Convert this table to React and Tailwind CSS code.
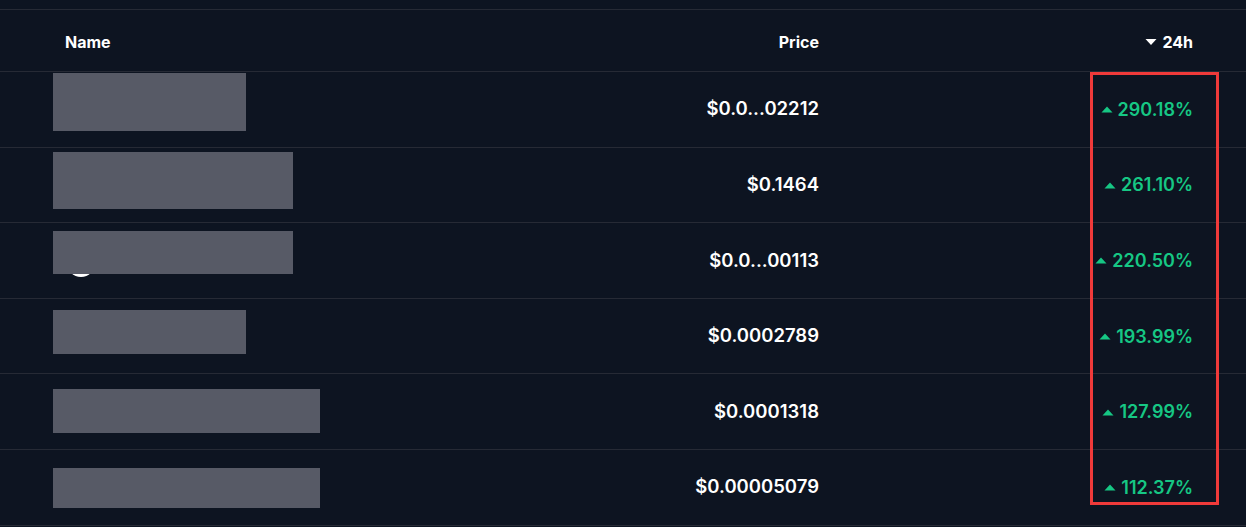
import React from 'react';

const rows = [
  { price: '$0.0...02212', change: '290.18%', box: 'w-[193px] h-[58px] mt-[1px]' },
  { price: '$0.1464', change: '261.10%', box: 'w-[240px] h-[57px] mt-[4px]' },
  { price: '$0.0...00113', change: '220.50%', box: 'w-[240px] h-[43px] mt-[8px]', logo: true },
  { price: '$0.0002789', change: '193.99%', box: 'w-[193px] h-[44px] mt-[11px]' },
  { price: '$0.0001318', change: '127.99%', box: 'w-[267px] h-[44px] mt-[15px]' },
  { price: '$0.00005079', change: '112.37%', box: 'w-[267px] h-[40px] mt-[18px]' },
];

const CaretUp = () => (
  <svg width="12" height="12" viewBox="0 0 12 12" className="mr-[5px]">
    <path d="M0.5 9.5 L6 3.5 L11.5 9.5 Z" fill="#16c784" />
  </svg>
);

const CaretDown = () => (
  <svg width="12" height="12" viewBox="0 0 12 12" className="mr-[5px]">
    <path d="M0.5 3 L6 9 L11.5 3 Z" fill="#ffffff" />
  </svg>
);

export default function App() {
  return (
    <div className="relative w-[1246px] h-[527px] overflow-hidden bg-[#0d1421] pt-[9px] font-['Inter',sans-serif] text-white">
      <div className="border-t border-[#262a35]">
        {/* header */}
        <div className="flex h-[62px] items-center border-b border-[#262a35] pt-[3px] text-[16px] font-bold">
          <div className="flex-1 pl-[65px]">Name</div>
          <div className="w-[200px] text-right">Price</div>
          <div className="flex w-[374px] items-center justify-end">
            <CaretDown />
            24h
          </div>
          <div className="w-[53px]" />
        </div>

        {rows.map((r, i) => (
          <div key={i} className="flex h-[75.6px] border-b border-[#262a35]">
            <div className="relative flex-1 pl-[53px]">
              {r.logo && (
                <div className="absolute left-[67px] top-[26px] h-[28px] w-[28px] rounded-full bg-white" />
              )}
              <div className={`relative bg-[#575a66] ${r.box}`} />
            </div>
            <div className="flex w-[200px] items-center justify-end text-[18.5px] font-semibold">
              {r.price}
            </div>
            <div className="flex w-[374px] items-center justify-end text-[18px] font-semibold text-[#16c784]">
              <CaretUp />
              {r.change}
            </div>
            <div className="w-[53px]" />
          </div>
        ))}
      </div>

      {/* highlight box */}
      <div className="absolute left-[1090px] top-[72px] h-[433px] w-[129px] border-[3px] border-[#f03a3a]" />
    </div>
  );
}
